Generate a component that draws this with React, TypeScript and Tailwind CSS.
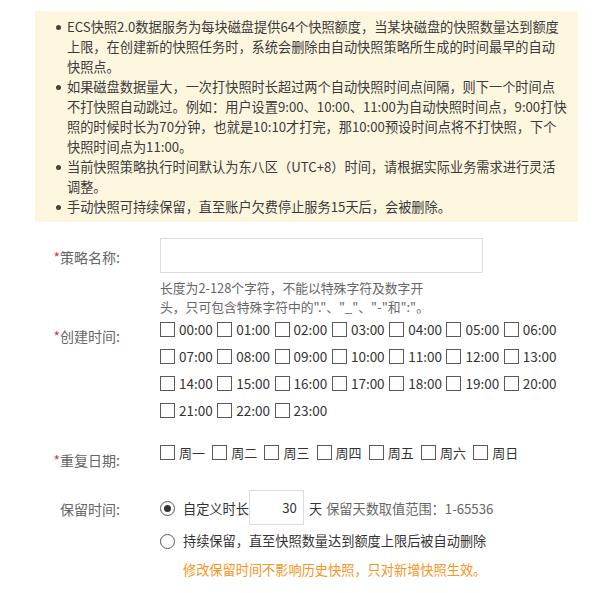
import React from "react";

const notes: string[][] = [
  [
    "ECS快照2.0数据服务为每块磁盘提供64个快照额度，当某块磁盘的快照数量达到额度",
    "上限，在创建新的快照任务时，系统会删除由自动快照策略所生成的时间最早的自动",
    "快照点。",
  ],
  [
    "如果磁盘数据量大，一次打快照时长超过两个自动快照时间点间隔，则下一个时间点",
    "不打快照自动跳过。例如：用户设置9:00、10:00、11:00为自动快照时间点，9:00打快",
    "照的时候时长为70分钟，也就是10:10才打完，那10:00预设时间点将不打快照，下个",
    "快照时间点为11:00。",
  ],
  [
    "当前快照策略执行时间默认为东八区（UTC+8）时间，请根据实际业务需求进行灵活",
    "调整。",
  ],
  ["手动快照可持续保留，直至账户欠费停止服务15天后，会被删除。"],
];

const hours = Array.from({ length: 24 }, (_, i) => `${String(i).padStart(2, "0")}:00`);
const days = ["周一", "周二", "周三", "周四", "周五", "周六", "周日"];

function Box() {
  return <span className="w-[15px] h-[15px] border border-[#5a5a5a] bg-white shrink-0" />;
}

function Label({ text, required, className }: { text: string; required?: boolean; className?: string }) {
  return (
    <div className={`w-[120px] shrink-0 text-right text-[14px] text-[#666] ${className ?? ""}`}>
      {required && <span className="text-[#e4393c]">*</span>}
      {text}:
    </div>
  );
}

export default function App() {
  const rows = [hours.slice(0, 7), hours.slice(7, 14), hours.slice(14, 21), hours.slice(21)];

  return (
    <div className="w-[596px] h-[593px] bg-white font-['Noto_Sans_CJK_SC','Noto_Sans',sans-serif] text-[#333] overflow-hidden">
      <div className="ml-[35px] mt-[11px] w-[543px] h-[211px] bg-[#fdf6df] pt-[6px] pl-[21px] text-[13.2px] leading-[20px] text-[#3a3a3a]">
        {notes.map((lines, i) => (
          <div key={i} className="flex">
            <span className="w-[5px] h-[5px] rounded-full bg-[#444] mt-[8px] mr-[6px] shrink-0" />
            <div>
              {lines.map((l, j) => (
                <div key={j} className="whitespace-nowrap">
                  {l}
                </div>
              ))}
            </div>
          </div>
        ))}
      </div>

      <div className="flex mt-[16px]">
        <Label text="策略名称" required className="leading-[35px] pt-[2px]" />
        <div className="ml-[40px]">
          <div className="w-[323px] h-[35px] border border-[#dcdcdc] bg-white" />
          <div className="mt-[5px] text-[12.8px] leading-[19px] text-[#666]">
            <div>长度为2-128个字符，不能以特殊字符及数字开</div>
            <div>头，只可包含特殊字符中的"."、"_"、"-"和":"。</div>
          </div>
        </div>
      </div>

      <div className="flex">
        <Label text="创建时间" required className="pt-[10px] leading-[20px]" />
        <div className="ml-[40px]">
          {rows.map((r, i) => (
            <div key={i} className="flex h-[27px] items-center">
              {r.map((h) => (
                <div key={h} className="w-[57.3px] flex items-center gap-[4px] text-[13.5px]">
                  <Box />
                  <span>{h}</span>
                </div>
              ))}
            </div>
          ))}
        </div>
      </div>

      <div className="flex mt-[15px]">
        <Label text="重复日期" required className="pt-[11px] leading-[20px]" />
        <div className="ml-[40px] flex h-[27px] items-center">
          {days.map((d) => (
            <div key={d} className="w-[52.2px] flex items-center gap-[4px] text-[13px]">
              <Box />
              <span>{d}</span>
            </div>
          ))}
        </div>
      </div>

      <div className="flex mt-[20px]">
        <Label text="保留时间" className="pt-[9px] leading-[20px]" />
        <div className="ml-[40px] text-[13.2px]">
          <div className="flex items-center h-[35px]">
            <span className="w-[15px] h-[15px] rounded-full border border-[#555] flex items-center justify-center mt-[2px]">
              <span className="w-[7px] h-[7px] rounded-full bg-[#333]" />
            </span>
            <span className="ml-[8px] mt-[2px]">自定义时长</span>
            <div className="w-[55px] h-[35px] border border-[#dcdcdc] bg-white text-right pr-[6px] leading-[33px]">30</div>
            <span className="ml-[5px] mt-[2px]">天</span>
            <span className="ml-[4px] mt-[2px] text-[#666]">保留天数取值范围：1-65536</span>
          </div>
          <div className="flex items-center h-[24px] mt-[4px]">
            <span className="w-[15px] h-[15px] rounded-full border border-[#555]" />
            <span className="ml-[8px]">持续保留，直至快照数量达到额度上限后被自动删除</span>
          </div>
          <div className="mt-[7px] ml-[23px] text-[#f7941d] leading-[20px]">修改保留时间不影响历史快照，只对新增快照生效。</div>
        </div>
      </div>
    </div>
  );
}
